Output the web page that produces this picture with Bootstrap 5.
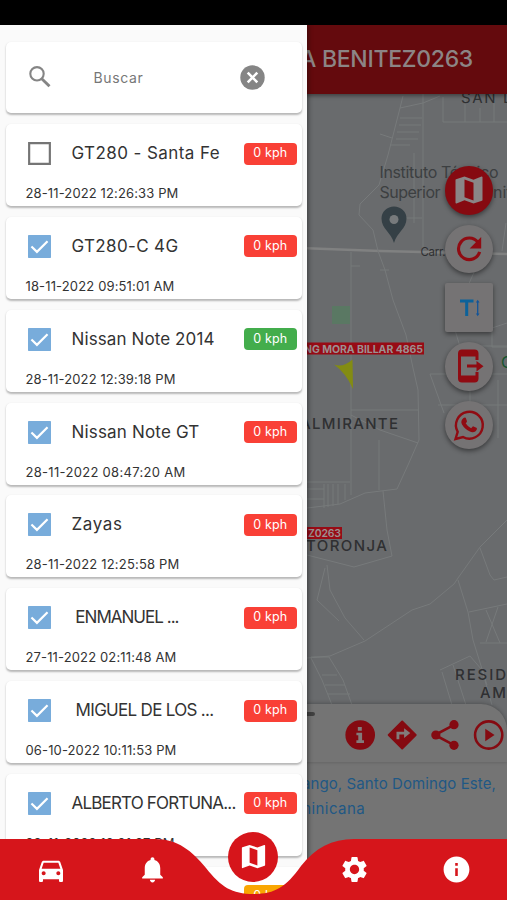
<!DOCTYPE html>
<html lang="es">
<head>
<meta charset="utf-8">
<meta name="viewport" content="width=device-width, initial-scale=1">
<title>Rastreo</title>
<link href="https://cdn.jsdelivr.net/npm/bootstrap@5.3.0/dist/css/bootstrap.min.css" rel="stylesheet">
<style>
body{font-family:Inter,"Liberation Sans",sans-serif;background:#000;margin:0}
.phone{width:507px;height:900px}
.statusbar{height:25px;background:#000}
.screen{height:875px;background:#696b6d}
.fit{white-space:pre;display:inline-block}
.appbar{height:69px;background:#640a0d;color:#8c8585;font-size:23px;font-weight:500;padding-right:34px;box-shadow:0 2px 4px #0006;z-index:1}
.map{height:611px;background:#696b6d}
.map>svg{display:block}
.map text{font-family:Inter,sans-serif;fill:#2f3032}
.tools{top:72px;left:444.5px;gap:10.2px}
.tool{width:48.500px;height:48.500px;border-radius:50%;background:#757374;box-shadow:0 2px 5px #0007}
.tool-main{background:#860a11}
.tool-square{border-radius:2px}
.sheet{height:196px;margin-top:-1px;border-radius:0 26px 0 0;background:#747474;z-index:1;box-shadow:0 -1px 4px #0003}
.sheet-actions{height:58px;padding:15px 3px 0 344.5px;gap:12px;border-radius:0 26px 0 0;box-shadow:0 1px 3px #0002}
.handle{left:190px;top:8px;width:125px;height:4px;border-radius:2px;background:#414141}
.address{color:#1f5885;font-size:15px;line-height:24.5px;padding-top:10px;width:496px}
.address div:last-child{width:365px}
.drawer{width:306.5px;height:875px;background:#fafafa;top:0;left:0;z-index:3;padding:17px 5px 0 5.5px;box-shadow:1px 0 5px #0007}
.item,.search{background:#fff;border-radius:5px;box-shadow:0 1.5px 2px #0004;flex:none}
.search{height:71px;margin-bottom:11px;padding:0 36.5px 0 22px;color:#777}
.search .fit{margin-left:43px;font-size:14px}
.item{height:82px;margin-bottom:10.85px;padding:18px 4.5px 0 22px}
.item-row{height:23px}
.item-name{font-size:17px;color:#333;margin-left:21px;line-height:23px}
.item-date{font-size:13px;color:#333;line-height:16px;margin:20px 0 0 -2px}
.speed{width:53.5px;height:22px;border-radius:4px;background:#f94036;color:#fff;font-size:12.5px}
.speed-on{background:#43ad4c}
.speed-idle{background:#f9a602}
.bottombar{height:61px;left:0;bottom:0;width:507px;z-index:4}
.bottombar .slots{inset:0}
.slots>div{width:101.4px;height:61px}
.fab{width:50px;height:50px;border-radius:50%;background:#d6151b;margin-top:-26px}
</style>
<script src="https://cdn.jsdelivr.net/npm/bootstrap@5.3.0/dist/js/bootstrap.bundle.min.js"></script>
</head>
<body>
<svg width="0" height="0" class="position-absolute">
<defs>
<symbol id="i-map" viewBox="0 0 24 24"><path fill="currentColor" d="M20.5 3l-.16.03L15 5.1 9 3 3.36 4.9c-.21.07-.36.25-.36.48V20.500c0 .28.22.5.5.5l.16-.03L9 18.900l6 2.100 5.640-1.900c.21-.07.36-.25.36-.48V3.500c0-.28-.22-.5-.5-.5zM15 19l-6-2.110V5l6 2.110V19z"/></symbol>
<symbol id="i-info" viewBox="0 0 24 24"><path fill="currentColor" d="M12 2C6.480 2 2 6.480 2 12s4.480 10 10 10 10-4.480 10-10S17.520 2 12 2zm1 15h-2v-6h2v6zm0-8h-2V7h2v2z"/></symbol>
<symbol id="i-on" viewBox="3 3 18 18"><path fill="#78acdb" d="M3.500 3h17q.5 0 .5.5v17q0 .5-.5.5h-17q-.5 0-.5-.5v-17q0-.5.5-.5z"/><path fill="none" stroke="#fff" stroke-width="1.700" d="M5.700 12L10 16.200 18.300 7.900"/></symbol>
<symbol id="i-off" viewBox="3 3 18 18"><path fill="none" stroke="#757575" stroke-width="1.700" d="M3.900 3.900h16.200v16.200H3.900z"/></symbol>
</defs>
</svg>
<main class="phone d-flex flex-column position-relative overflow-hidden">
<div class="statusbar"></div>
<div class="screen position-relative d-flex flex-column">
<header class="appbar d-flex align-items-center justify-content-end position-relative flex-shrink-0"><span class="fit" data-w="173">A BENITEZ0263</span></header>
<section class="map position-relative overflow-hidden flex-shrink-0">
<svg width="507" height="611" viewBox="0 94 507 611">
<g fill="none" stroke="#777a7b" stroke-width="1">
<path d="M300 248L380 251 507 254" stroke="#808181" stroke-width="2.500"/>
<path d="M403 96L400 108 388 155 379 185 360 204 359 215 373 230 378 251 385 270 393 300 406 335 413 368 418 390 419 440 408 465 397 489 365 493 340 504 307 508"/>
<path d="M400 108L423 103 440 96M423 94V250M400 118h22M399 125h22M397 132h22M396 139h22M390 145h20M443 97V122H507M465 97v25M480 108v14M494 100v22M380 134l12 4M414 153v70M387 218h35"/>
<path d="M351 252V495M351 410h68M351 415L380 430 418 443M351 266h9M380 270h9"/>
<path d="M379 440V490M383 491L387 530 392 556 354 567 307 555M327 565L330 590 345 618 364 640M325 568L317 600 339 621"/>
<path d="M307 482h43M307 489h17M324 484v24M328 484v23M333 484v22M338 484v20M345 484v16M307 499h17"/>
<path d="M307 658L330 656 365 641 412 610 430 604 454 584 458 578 480 547 507 520M458 580L468 612 473 640 487 685M469 612L507 604M480 548L490 575 494 580 507 577M486 610L500 643H507M498 607l-12 35M480 643h20M329 657L343 680 352 705M311 658L322 680 332 705M322 675h15M325 685h20M328 694h22M311 657h18"/>
<path d="M430 374L444 413M430 374h77M438 405h69M455 330L470 380M492 322v25h15M481 346h26M486 330l21-7M475 270l-8 18M506 223l-4 28M470 365v40M498 380v58M440 670l30-14 12 14 10 35M442 672l10 33M453 665l13 40"/>
</g>
<path fill="#5a7863" d="M332 306h18v18h-18z"/>
<text x="461" y="103" font-size="15" textLength="80">SAN LUIS</text>
<g font-size="16"><text x="379.500" y="178" textLength="119" style="fill:#3c3f41">Instituto Técnico</text><text x="379.500" y="198" textLength="61" style="fill:#3c3f41">Superior</text><text x="493" y="198" style="fill:#3c3f41">nit</text></g>
<path d="M394 243C391 232 381.500 229 381.500 218.500a12.500 12 0 0 1 25 0C406.500 229 397 232 394 243z" fill="#354046"/><circle cx="394" cy="219.500" r="4.500" fill="#777a7c"/>
<text x="420.500" y="256" font-size="11.500" textLength="25">Carr.</text>
<path fill="#980b15" d="M300 342.500h124v12H300zM300 527h42v12H300z"/>
<text x="304" y="352.500" font-size="10.500" font-weight="700" textLength="119" style="fill:#9c9091">NG MORA BILLAR 4865</text>
<text x="308" y="537" font-size="10.500" font-weight="600" textLength="33" style="fill:#9c9091">Z0263</text>
<path fill="#838c13" d="M334 364.500Q343 368 352.500 359.500L353 389Q346 373 334 364.500z"/>
<g font-size="15" font-weight="500"><text x="300" y="428.500" textLength="98">ALMIRANTE</text><text x="306" y="551" textLength="81">TORONJA</text><text x="455" y="679.500" textLength="51">RESID</text><text x="480" y="698" textLength="26">AM</text></g>
<text x="501" y="368" font-size="16" style="fill:#17552e">C</text>
</svg>
<div class="tools position-absolute d-flex flex-column">
<div class="tool tool-main d-flex align-items-center justify-content-center"><svg width="36" height="36" style="color:#8a8687"><use href="#i-map"/></svg></div>
<div class="tool d-flex align-items-center justify-content-center"><svg width="34" height="34" viewBox="0 0 24 24"><path fill="none" stroke="#900b12" stroke-width="2.200" d="M18.200 7.200A7.600 7.600 0 1 0 19.500 14"/><path fill="#900b12" d="M20.600 3.500v8.100h-8.100z"/></svg></div>
<div class="tool tool-square d-flex align-items-center justify-content-center"><svg width="24" height="22" viewBox="0 0 24 22"><path d="M3 4h13.500M9.700 4v15" fill="none" stroke="#0c629a" stroke-width="3"/><path d="M20.700 5v12" stroke="#135499" stroke-width="1.300"/><path fill="#135499" d="M18.900 5.500L20.700 2.800 22.500 5.500zM18.900 16.500l1.800 2.700 1.800-2.700z"/></svg></div>
<div class="tool d-flex align-items-center justify-content-center"><svg width="36" height="36" viewBox="0 0 36 36"><path fill="none" stroke="#900b12" stroke-width="3" d="M26 12V5.500q0-2.500-2.500-2.500H11q-2.500 0-2.500 2.500v25Q8.500 33 11 33h12.500q2.500 0 2.500-2.500V24"/><path fill="#900b12" d="M9 2h17v6.500H9zM9 27.500h17v6.500H9zM16 16.500h9.500V13l7 5.300-7 5.200v-4H16z"/></svg></div>
<div class="tool d-flex align-items-center justify-content-center"><svg width="34" height="34" viewBox="0 0 34 34"><path fill="none" stroke="#900b12" stroke-width="2.400" d="M3.500 31L5.700 23.800A13.400 13.400 0 1 1 11 29z"/><path fill="#900b12" d="M11.500 10q1-.8 2.200-.3l1.300 3.500q0 1-1.300 2.100 1.900 3.500 5.400 4.900l1.900-2 3.900 1.900q.3 1.900-1.300 3.100-2.500 1.800-5.700.4-4.800-1.900-7.900-7-1.900-3.800 1.500-6.600z"/></svg></div>
</div>
</section>
<section class="sheet position-relative flex-shrink-0">
<div class="handle position-absolute"></div>
<div class="sheet-actions d-flex">
<svg width="31" height="32" viewBox="0 0 32 32"><circle cx="16" cy="16" r="15.600" fill="#850a11"/><path fill="#827b7b" d="M13.500 7.500h4.200v4h-4.200zM12 13.500h6v8h2v2.800h-8v-2.800h2v-5.200h-2z"/></svg>
<svg width="31" height="32" viewBox="0 0 32 32"><path fill="#850a11" stroke="#850a11" stroke-width="2" stroke-linejoin="round" d="M16 1.800L30.200 16 16 30.200 1.800 16z"/><path fill="#827b7b" d="M10 20.500v-8h8V9l6.500 5-6.500 5.200v-3.700h-5v5z"/></svg>
<svg width="32" height="32" viewBox="0 0 32 32"><path d="M26 5.500L6 16l20 10.500" fill="none" stroke="#850a11" stroke-width="2.600"/><g fill="#850a11"><circle cx="25.500" cy="5.500" r="4.700"/><circle cx="7" cy="16" r="4.700"/><circle cx="25.500" cy="26.500" r="4.700"/></g></svg>
<svg width="32" height="32" viewBox="0 0 32 32"><circle cx="16" cy="16" r="13.900" fill="none" stroke="#850a11" stroke-width="2.600"/><path fill="#850a11" d="M12.500 9.500L22 16l-9.500 6.500z"/></svg>
</div>
<div class="address text-end"><div><span class="fit" data-w="194">ango, Santo Domingo Este,</span></div><div><span class="fit" data-w="67">minicana</span></div></div>
</section>
<aside class="drawer position-absolute d-flex flex-column overflow-hidden">
<div class="search d-flex align-items-center">
<svg width="23" height="23" viewBox="0 0 23 23"><g fill="none" stroke="#858585"><circle cx="9" cy="7.800" r="6.700" stroke-width="2.100"/><path d="M13.500 12.500L21.500 20.300" stroke-width="2.900"/></g></svg>
<span class="fit" data-w="50" id="hint">Buscar</span>
<svg class="ms-auto" width="25" height="25" viewBox="0 0 25 25"><circle cx="12.500" cy="12.500" r="12.200" fill="#858585"/><path d="M7.700 7.700l9.600 9.600M17.300 7.700l-9.600 9.600" stroke="#fff" stroke-width="2.600"/></svg>
</div>
<div id="list"></div>
</aside>
<nav class="bottombar position-absolute">
<svg class="d-block" width="507" height="61" viewBox="0 839 507 61"><path fill="#d6151b" d="M0 839H155C178 839 192 851 206 868 221 887 232 894 253.500 894 275 894 286 887 301 866 315 848 332 839 354 839H507V900H0z"/></svg>
<div class="slots position-absolute d-flex text-white">
<div class="d-flex align-items-center justify-content-center"><svg width="32" height="32" viewBox="0 0 24 24"><path fill="#fff" d="M18.920 6.010C18.720 5.420 18.160 5 17.500 5h-11c-.66 0-1.210.42-1.420 1.010L3 12v8c0 .55.45 1 1 1h1c.55 0 1-.45 1-1v-1h12v1c0 .55.45 1 1 1h1c.55 0 1-.45 1-1v-8l-2.080-5.990zM6.500 16c-.83 0-1.500-.67-1.500-1.500S5.670 13 6.500 13s1.500.67 1.500 1.500S7.330 16 6.500 16zm11 0c-.83 0-1.500-.67-1.500-1.500s.67-1.500 1.500-1.500 1.500.67 1.500 1.500-.67 1.500-1.500 1.500zM5 11l1.500-4.500h11L19 11H5z"/></svg></div>
<div class="d-flex align-items-center justify-content-center"><svg width="31" height="31" viewBox="0 0 24 24"><path fill="#fff" d="M12 22c1.100 0 2-.9 2-2h-4c0 1.100.89 2 2 2zm6-6v-5c0-3.070-1.640-5.640-4.500-6.320V4c0-.83-.67-1.500-1.500-1.500s-1.500.67-1.500 1.500v.68C7.630 5.360 6 7.920 6 11v5l-2 2v1h16v-1l-2-2z"/></svg></div>
<div class="d-flex align-items-center justify-content-center"><div class="fab d-flex align-items-center justify-content-center"><svg width="31" height="31"><use href="#i-map"/></svg></div></div>
<div class="d-flex align-items-center justify-content-center"><svg width="31" height="31" viewBox="0 0 24 24"><path fill="#fff" d="M19.140 12.940c.04-.3.06-.61.06-.94 0-.32-.02-.64-.07-.94l2.030-1.580c.18-.14.23-.41.12-.61l-1.920-3.320c-.12-.22-.37-.29-.59-.22l-2.390.96c-.5-.38-1.030-.7-1.620-.94l-.36-2.540c-.04-.24-.24-.41-.48-.41h-3.840c-.24 0-.43.17-.47.41l-.36 2.540c-.59.24-1.130.57-1.620.94l-2.390-.96c-.22-.08-.47 0-.59.22L2.740 8.870c-.12.21-.08.47.12.61l2.030 1.580c-.05.3-.09.63-.09.94s.02.64.07.94l-2.030 1.580c-.18.14-.23.41-.12.61l1.920 3.320c.12.22.37.29.59.22l2.390-.96c.5.38 1.030.7 1.620.94l.36 2.540c.05.24.24.41.48.41h3.840c.24 0 .44-.17.47-.41l.36-2.540c.59-.24 1.130-.56 1.620-.94l2.390.96c.22.08.47 0 .59-.22l1.920-3.320c.12-.22.07-.47-.12-.61l-2.010-1.580zM12 15.600c-1.980 0-3.600-1.620-3.600-3.600s1.620-3.600 3.600-3.600 3.600 1.620 3.600 3.600-1.620 3.600-3.600 3.600z"/></svg></div>
<div class="d-flex align-items-center justify-content-center"><svg width="31" height="31"><use href="#i-info"/></svg></div>
</div>
</nav>
</div>
</main>
<script>
// name, name width, date, date width, speed class, checked
const units=[
["GT280 - Santa Fe",148.5,"28-11-2022 12:26:33 PM",153,"",0],
["GT280-C 4G",107,"18-11-2022 09:51:01 AM",149,"",1],
["Nissan Note 2014",143,"28-11-2022 12:39:18 PM",150,"speed-on",1],
["Nissan Note GT",128,"28-11-2022 08:47:20 AM",160,"",1],
["Zayas",51,"28-11-2022 12:25:58 PM",154,"",1],
[" ENMANUEL ...",107,"27-11-2022 02:11:48 AM",151,"",1],
[" MIGUEL DE LOS ...",142,"06-10-2022 10:11:53 PM",151,"",1],
["ALBERTO FORTUNA...",164,"28-11-2022 12:21:37 PM",149,"",1],
["",0,"",0,"speed-idle",1]];
document.getElementById("list").innerHTML=units.map(u=>`<div class="item"><div class="item-row d-flex align-items-center"><svg width="23" height="23"><use href="#i-${u[5]?"on":"off"}"/></svg><span class="item-name fit" data-w="${u[1]}">${u[0]}</span><span class="speed ${u[4]} ms-auto d-flex align-items-center justify-content-center"><span class="fit" data-w="34">0 kph</span></span></div><div class="item-date"><span class="fit" data-w="${u[3]}">${u[2]}</span></div></div>`).join("");
// track each label so that it fills its own width
document.querySelectorAll(".fit").forEach(e=>{
 const n=e.textContent.length,w=+e.dataset.w;
 if(n>1)e.style.letterSpacing=(w-e.getBoundingClientRect().width)/n+"px";
});
</script>
</body>
</html>
